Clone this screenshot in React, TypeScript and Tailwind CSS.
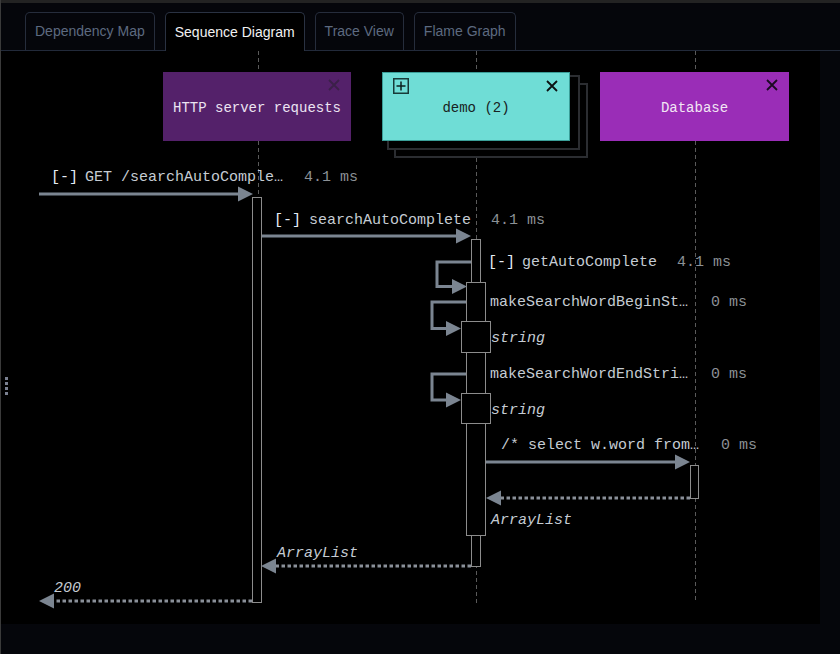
import React from "react";

const tabs = ["Dependency Map", "Sequence Diagram", "Trace View", "Flame Graph"];

const mono = "'Liberation Mono', 'DejaVu Sans Mono', monospace";
const ARROW = "#7b8591";
const RETURN = "#8a9099";
const BOX = "#8c8c8c";
const LIFE = "#5a5a5a";

function Close({ color }: { color: string }) {
  return (
    <svg width="12" height="12" viewBox="0 0 12 12" className="absolute right-[11px] top-[7px]">
      <path d="M1 1 L11 11 M11 1 L1 11" stroke={color} strokeWidth="1.8" />
    </svg>
  );
}

function Participant({
  left,
  width,
  label,
  className,
  closeColor,
  expandable,
}: {
  left: number;
  width: number;
  label: string;
  className: string;
  closeColor: string;
  expandable?: boolean;
}) {
  return (
    <div
      className={`absolute top-[21px] h-[69px] pt-[4px] flex items-center justify-center text-[14px] ${className}`}
      style={{ left, width, fontFamily: mono }}
    >
      {expandable && (
        <svg width="16" height="16" viewBox="0 0 16 16" className="absolute left-[10px] top-[5px]">
          <rect x="0.75" y="0.75" width="14.5" height="14.5" fill="none" stroke="#183a38" strokeWidth="1.5" />
          <path d="M8 3.5 V12.5 M3.5 8 H12.5" stroke="#0d1f1e" strokeWidth="1.5" />
        </svg>
      )}
      <span>{label}</span>
      <Close color={closeColor} />
    </div>
  );
}

function Head({ x, y, dir }: { x: number; y: number; dir: "r" | "l" }) {
  const b = dir === "r" ? x - 15 : x + 15;
  return <polygon points={`${b},${y - 7.5} ${x},${y} ${b},${y + 7.5}`} fill={ARROW} />;
}

function Label({ x, y, children, fill = "#c5ccd3", italic }: { x: number; y: number; children: React.ReactNode; fill?: string; italic?: boolean }) {
  return (
    <text x={x} y={y} fill={fill} fontFamily={mono} fontSize="15" fontStyle={italic ? "italic" : "normal"}>
      {children}
    </text>
  );
}

function Diagram() {
  return (
    <svg width="819" height="573" viewBox="1 51 819 573" className="block">
      {/* lifelines */}
      <g stroke={LIFE} strokeWidth="1" strokeDasharray="4 3">
        <line x1="258.5" y1="51" x2="258.5" y2="72" />
        <line x1="258.5" y1="141" x2="258.5" y2="603" />
        <line x1="476.5" y1="51" x2="476.5" y2="72" />
        <line x1="476.5" y1="158" x2="476.5" y2="603" />
        <line x1="695.5" y1="51" x2="695.5" y2="72" />
        <line x1="695.5" y1="141" x2="695.5" y2="603" />
      </g>

      {/* activations */}
      <g fill="#000" stroke={BOX} strokeWidth="1">
        <rect x="252.5" y="197.5" width="9" height="405" />
        <rect x="471.5" y="239.5" width="9" height="327" />
        <rect x="466.5" y="282.5" width="19" height="253" />
        <rect x="461.5" y="321.5" width="29" height="31" />
        <rect x="461.5" y="393.5" width="29" height="30" />
        <rect x="690.5" y="465.5" width="8" height="33" />
      </g>

      {/* calls */}
      <g stroke={ARROW} strokeWidth="3" fill="none">
        <line x1="39" y1="194" x2="240" y2="194" />
        <line x1="262" y1="236" x2="458" y2="236" />
        <polyline points="471,262 437,262 437,286.5 454,286.5" />
        <polyline points="466,302 432,302 432,328.5 448,328.5" />
        <polyline points="466,374 432,374 432,400 448,400" />
        <line x1="486" y1="462" x2="677" y2="462" />
      </g>
      <Head x={253} y={194} dir="r" />
      <Head x={471} y={236} dir="r" />
      <Head x={467} y={286.5} dir="r" />
      <Head x={461} y={328.5} dir="r" />
      <Head x={461} y={400} dir="r" />
      <Head x={690} y={462} dir="r" />

      {/* returns */}
      <g stroke={RETURN} strokeWidth="3" strokeDasharray="3.5 2.5" fill="none">
        <line x1="690" y1="498" x2="500" y2="498" />
        <line x1="471" y1="566" x2="275" y2="566" />
        <line x1="252" y1="601" x2="53" y2="601" />
      </g>
      <Head x={486} y={498} dir="l" />
      <Head x={261} y={566} dir="l" />
      <Head x={39} y={601} dir="l" />

      {/* labels */}
      <Label x={51} y={181} fill="#e4ecf4">[-]</Label>
      <Label x={85} y={181}>GET /searchAutoComple…</Label>
      <Label x={304} y={181} fill="#8c9196">4.1 ms</Label>

      <Label x={274} y={224} fill="#e4ecf4">[-]</Label>
      <Label x={309} y={224}>searchAutoComplete</Label>
      <Label x={491} y={224} fill="#8c9196">4.1 ms</Label>

      <Label x={488} y={266} fill="#e4ecf4">[-]</Label>
      <Label x={522} y={266}>getAutoComplete</Label>
      <Label x={677} y={266} fill="#8c9196">4.1 ms</Label>

      <Label x={490} y={306}>makeSearchWordBeginSt…</Label>
      <Label x={711} y={306} fill="#8c9196">0 ms</Label>
      <Label x={491} y={342} italic>string</Label>

      <Label x={490} y={378}>makeSearchWordEndStri…</Label>
      <Label x={711} y={378} fill="#8c9196">0 ms</Label>
      <Label x={491} y={414} italic>string</Label>

      <Label x={501} y={449}>/* select w.word from…</Label>
      <Label x={721} y={449} fill="#8c9196">0 ms</Label>
      <Label x={491} y={524} italic>ArrayList</Label>

      <Label x={277} y={557} italic>ArrayList</Label>
      <Label x={54} y={592} italic>200</Label>
    </svg>
  );
}

export default function App() {
  return (
    <div className="w-[840px] h-[654px] bg-[#05060b] border-l border-[#3a3a3a] overflow-hidden flex flex-col" style={{ fontFamily: "'Liberation Sans', Arial, sans-serif" }}>
      <div className="h-[3px] bg-[#232323] -ml-px" />
      {/* tab bar */}
      <div className="flex gap-[10px] pl-[24px] pt-[9px] border-b border-[#222a3a]">
        {tabs.map((t, i) => {
          const active = i === 1;
          return (
            <div
              key={t}
              className={`h-[38px] px-[9px] flex items-center rounded-t-[5px] border border-b-0 text-[14px] ${
                active ? "bg-black border-[#2a3242] text-[#f2f2f2] h-[39px] -mb-px" : "border-[#262d3c] text-[#5d6a80]"
              }`}
            >
              {t}
            </div>
          );
        })}
      </div>
      {/* canvas */}
      <div className="relative w-[819px] h-[573px] bg-black">
        <Diagram />
        <Participant left={162} width={188} label="HTTP server requests" className="bg-[#54216a] text-[#ece4f2]" closeColor="#3b2049" />
        {/* stacked copies behind demo */}
        <div className="absolute left-[393px] top-[32px] w-[194px] h-[75px] bg-black border-2 border-[#2b2d31]" />
        <div className="absolute left-[386px] top-[24px] w-[193px] h-[75px] bg-black border-2 border-[#2b2d31]" />
        <Participant left={381} width={188} label="demo (2)" className="bg-[#6fddd6] border border-[#3a9e98] text-[#182222]" closeColor="#0c1212" expandable />
        <Participant left={599} width={189} label="Database" className="bg-[#9a2db7] text-[#f2e6f4]" closeColor="#1b0a22" />
        {/* drag handle */}
        <div className="absolute left-[4px] top-[326px] flex flex-col gap-[2px]">
          <div className="w-[3px] h-[3px] bg-[#7a8090]" />
          <div className="w-[3px] h-[3px] bg-[#7a8090]" />
          <div className="w-[3px] h-[3px] bg-[#7a8090]" />
          <div className="w-[3px] h-[3px] bg-[#7a8090]" />
        </div>
      </div>
    </div>
  );
}
